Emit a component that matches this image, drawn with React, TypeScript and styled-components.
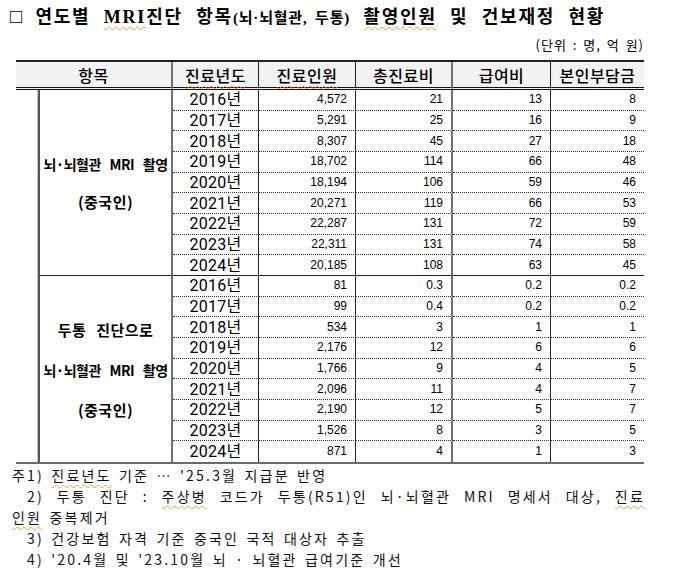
import React from 'react';
import styled, { createGlobalStyle } from 'styled-components';

const GlobalStyle = createGlobalStyle`
  html, body { margin: 0; padding: 0; background: #fff; }
  body { font-family: "Noto Sans CJK KR", "Noto Sans", sans-serif; color: #000; }
`;

const Page = styled.div`
  width: 700px;
  height: 578px;
  overflow: hidden;
  box-sizing: border-box;
  padding: 6px 0 0 10px;
`;

const Title = styled.h1`
  margin: 0;
  height: 22px;
  font-size: 18px;
  line-height: 22px;
  font-weight: 700;
  font-family: "Liberation Serif", "Noto Sans CJK KR", serif;
  white-space: nowrap;
  letter-spacing: 1.8px;
  word-spacing: 7px;
`;

const Box = styled.span`
  font-size: 20px;
  line-height: 1;
  vertical-align: top;
  font-weight: 400;
  letter-spacing: 0;
`;

const TitleSmall = styled.span`
  font-size: 15px;
  letter-spacing: 0.8px;
  word-spacing: 3px;
`;

const Spell = styled.span`
  text-decoration: underline wavy #f0a050;
  text-decoration-thickness: 1px;
  text-underline-offset: 3px;
`;

const Unit = styled.div`
  width: 634px;
  text-align: right;
  font-size: 13px;
  line-height: 16px;
  margin-top: 9px;
  letter-spacing: 1px;
  word-spacing: 2px;
`;

const Table = styled.table`
  margin: 7px 0 0 6px;
  border-collapse: separate;
  border-spacing: 0;
  table-layout: fixed;
  width: 628px;
  border-top: 2px solid #222;
  border-bottom: 2px solid #6a6a6a;
`;

type Line = 'none' | 'mid' | 'heavy';
const lineCss = (l: Line | undefined) =>
  l === 'heavy' ? '2px solid #707070' : l === 'mid' ? '1px solid #222' : 'none';

const Th = styled.th<{ $line?: Line }>`
  height: 25px;
  padding: 0;
  background: #f2f2f2;
  font-size: 16px;
  font-weight: 500;
  border-bottom: 3px double #111;
  border-right: ${(p) => lineCss(p.$line)};
  letter-spacing: 0.5px;
`;

const Row = styled.tr`
  height: 20.67px;
`;

const BlankCell = styled.td`
  padding: 0;
  border-right: 1px solid #c8c8c8;
`;

const LabelCell = styled.td<{ $last?: boolean }>`
  padding: 0;
  border-left: 2px solid #555;
  border-right: 2px solid #707070;
  border-bottom: ${(p) => (p.$last ? 'none' : '1px solid #222')};
  vertical-align: middle;
`;

const LabelStack = styled.div<{ $gap: number }>`
  display: flex;
  flex-direction: column;
  align-items: center;
  gap: ${(p) => p.$gap}px;
  font-weight: 700;
  font-size: 15px;
  line-height: 20px;
  padding-top: 2px;
`;

const LabelLine = styled.span<{ $small?: boolean }>`
  font-size: ${(p) => (p.$small ? '14px' : '15px')};
  letter-spacing: ${(p) => (p.$small ? '-0.5px' : '0.5px')};
  word-spacing: 6px;
  white-space: nowrap;
`;

type Edge = 'dot' | 'solid' | 'none';
const edgeCss = (e: Edge) =>
  e === 'dot' ? '1px dotted #333' : e === 'solid' ? '1px solid #222' : 'none';

const YearCell = styled.td<{ $edge: Edge }>`
  padding: 0;
  text-align: center;
  font-family: Roboto, "Noto Sans CJK KR", sans-serif;
  font-size: 16px;
  line-height: 19px;
  letter-spacing: 0.3px;
  border-right: 1px solid #222;
  border-bottom: ${(p) => edgeCss(p.$edge)};
`;

const NumCell = styled.td<{ $edge: Edge; $line?: Line }>`
  padding: 0 8px 0 0;
  text-align: right;
  font-family: "Liberation Sans", Arial, sans-serif;
  font-size: 12px;
  line-height: 19px;
  border-right: ${(p) => lineCss(p.$line)};
  border-bottom: ${(p) => edgeCss(p.$edge)};
`;

const Notes = styled.div`
  margin-top: 1px;
  font-size: 14px;
  line-height: 21px;
  letter-spacing: 2.2px;
  word-spacing: 2px;
  white-space: nowrap;
  color: #111;
`;

const NoteLine = styled.div<{ $indent?: boolean }>`
  padding-left: ${(p) => (p.$indent ? '17px' : '2px')};
`;

const JustifiedLine = styled.div`
  padding-left: 17px;
  width: 618px;
  text-align: justify;
  text-align-last: justify;
  white-space: normal;
`;

type Group = {
  people: string[];
  total: string[];
  benefit: string[];
  self: string[];
};

const years = ['2016', '2017', '2018', '2019', '2020', '2021', '2022', '2023', '2024'];

const g1: Group = {
  people: ['4,572', '5,291', '8,307', '18,702', '18,194', '20,271', '22,287', '22,311', '20,185'],
  total: ['21', '25', '45', '114', '106', '119', '131', '131', '108'],
  benefit: ['13', '16', '27', '66', '59', '66', '72', '74', '63'],
  self: ['8', '9', '18', '48', '46', '53', '59', '58', '45'],
};

const g2: Group = {
  people: ['81', '99', '534', '2,176', '1,766', '2,096', '2,190', '1,526', '871'],
  total: ['0.3', '0.4', '3', '12', '9', '11', '12', '8', '4'],
  benefit: ['0.2', '0.2', '1', '6', '4', '4', '5', '3', '1'],
  self: ['0.2', '0.2', '1', '6', '5', '7', '7', '5', '3'],
};

function renderGroup(g: Group, last: boolean, label: React.ReactNode, withBlank: boolean) {
  return years.map((y, i) => {
    const edge: Edge = i < 8 ? 'dot' : last ? 'none' : 'solid';
    return (
      <Row key={y}>
        {i === 0 && withBlank && <BlankCell rowSpan={18} />}
        {i === 0 && (
          <LabelCell rowSpan={9} $last={last}>
            {label}
          </LabelCell>
        )}
        <YearCell $edge={edge}>{y}년</YearCell>
        <NumCell $edge={edge} $line="mid">{g.people[i]}</NumCell>
        <NumCell $edge={edge} $line="heavy">{g.total[i]}</NumCell>
        <NumCell $edge={edge} $line="mid">{g.benefit[i]}</NumCell>
        <NumCell $edge={edge}>{g.self[i]}</NumCell>
      </Row>
    );
  });
}

export default function App() {
  return (
    <>
      <GlobalStyle />
      <Page>
        <Title>
          <Box>□</Box> 연도별 <Spell>MRI</Spell>진단 항목<TitleSmall>(뇌·뇌혈관, 두통)</TitleSmall>{' '}
          <Spell>촬영인원</Spell> 및 건보재정 현황
        </Title>
        <Unit>(단위 : 명, 억 원)</Unit>
        <Table>
          <colgroup>
            <col style={{ width: 22 }} />
            <col style={{ width: 135 }} />
            <col style={{ width: 86 }} />
            <col style={{ width: 97 }} />
            <col style={{ width: 97 }} />
            <col style={{ width: 98 }} />
            <col style={{ width: 93 }} />
          </colgroup>
          <thead>
            <tr>
              <Th colSpan={2} $line="heavy">항목</Th>
              <Th $line="mid"><Spell>진료년도</Spell></Th>
              <Th $line="mid"><Spell>진료인원</Spell></Th>
              <Th $line="heavy">총진료비</Th>
              <Th $line="mid">급여비</Th>
              <Th>본인부담금</Th>
            </tr>
          </thead>
          <tbody>
            {renderGroup(
              g1,
              false,
              <LabelStack $gap={18}>
                <LabelLine $small>뇌·뇌혈관 MRI 촬영</LabelLine>
                <LabelLine>(중국인)</LabelLine>
              </LabelStack>,
              true
            )}
            {renderGroup(
              g2,
              true,
              <LabelStack $gap={20}>
                <LabelLine>두통 진단으로</LabelLine>
                <LabelLine $small>뇌·뇌혈관 MRI 촬영</LabelLine>
                <LabelLine>(중국인)</LabelLine>
              </LabelStack>,
              false
            )}
          </tbody>
        </Table>
        <Notes>
          <NoteLine>
            주1) <Spell>진료년도</Spell> 기준 … '25.3월 지급분 반영
          </NoteLine>
          <JustifiedLine>
            2) 두통 진단 : <Spell>주상병</Spell> 코드가 두통(R51)인 뇌·뇌혈관 MRI 명세서 대상, <Spell>진료</Spell>
          </JustifiedLine>
          <NoteLine>
            <Spell>인원</Spell> 중복제거
          </NoteLine>
          <NoteLine $indent>3) 건강보험 자격 기준 중국인 국적 대상자 추출</NoteLine>
          <NoteLine $indent>4) '20.4월 및 '23.10월 뇌 · 뇌혈관 급여기준 개선</NoteLine>
        </Notes>
      </Page>
    </>
  );
}
